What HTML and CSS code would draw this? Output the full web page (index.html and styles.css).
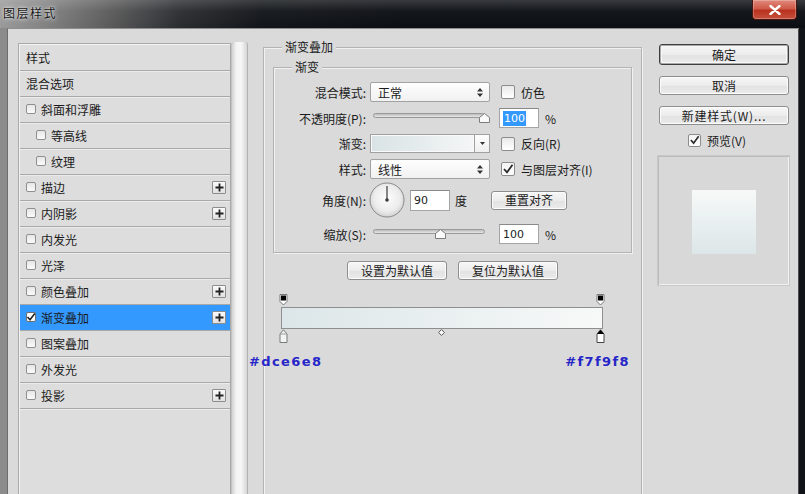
FILE: index.html
```html
<!DOCTYPE html>
<html>
<head>
<meta charset="utf-8">
<title>图层样式</title>
<link rel="stylesheet" href="styles.css">
</head>
<body>
<div class="window">
  <div class="titlebar">
    <span class="title">图层样式</span>
    <div class="close">
      <svg width="12" height="10" viewBox="0 0 12 10"><path d="M1.5 1 L10.5 9 M10.5 1 L1.5 9" stroke="#fff" stroke-width="2.4" stroke-linecap="round"/></svg>
    </div>
  </div>
  <div class="frame">
    <div class="client">
      <div class="leftcol">
        <div class="list">
          <div class="row">样式</div>
          <div class="row">混合选项</div>
          <div class="row"><span class="cb"></span>斜面和浮雕</div>
          <div class="row indent"><span class="cb"></span>等高线</div>
          <div class="row indent"><span class="cb"></span>纹理</div>
          <div class="row"><span class="cb"></span>描边<span class="plus"><svg width="9" height="9" viewBox="0 0 9 9"><path d="M4.5 0.5 V8.5 M0.5 4.5 H8.5" stroke="#222" stroke-width="1.8"/></svg></span></div>
          <div class="row"><span class="cb"></span>内阴影<span class="plus"><svg width="9" height="9" viewBox="0 0 9 9"><path d="M4.5 0.5 V8.5 M0.5 4.5 H8.5" stroke="#222" stroke-width="1.8"/></svg></span></div>
          <div class="row"><span class="cb"></span>内发光</div>
          <div class="row"><span class="cb"></span>光泽</div>
          <div class="row"><span class="cb"></span>颜色叠加<span class="plus"><svg width="9" height="9" viewBox="0 0 9 9"><path d="M4.5 0.5 V8.5 M0.5 4.5 H8.5" stroke="#222" stroke-width="1.8"/></svg></span></div>
          <div class="row active"><span class="cb checked"><svg width="10" height="10" viewBox="0 0 10 10"><path d="M1.5 5 L4 7.8 L8.8 1.5" stroke="#222" stroke-width="1.6" fill="none"/></svg></span>渐变叠加<span class="plus"><svg width="9" height="9" viewBox="0 0 9 9"><path d="M4.5 0.5 V8.5 M0.5 4.5 H8.5" stroke="#222" stroke-width="1.8"/></svg></span></div>
          <div class="row"><span class="cb"></span>图案叠加</div>
          <div class="row"><span class="cb"></span>外发光</div>
          <div class="row"><span class="cb"></span>投影<span class="plus"><svg width="9" height="9" viewBox="0 0 9 9"><path d="M4.5 0.5 V8.5 M0.5 4.5 H8.5" stroke="#222" stroke-width="1.8"/></svg></span></div>
        </div>
        <div class="scroll"></div>
      </div>

      <fieldset class="group outer">
        <legend>渐变叠加</legend>
        <fieldset class="group inner">
          <legend>渐变</legend>
          <div class="irow r1">
            <span class="lab">混合模式:</span>
            <div class="select"><span>正常</span>
              <svg class="updown" width="6" height="9" viewBox="0 0 6 9"><path d="M3 0 L6 3.5 H0 Z M3 9 L6 5.5 H0 Z" fill="#333"/></svg>
            </div>
            <span class="cbox"></span><span class="cbl">仿色</span>
          </div>
          <div class="irow r2">
            <span class="lab">不透明度(P):</span>
            <div class="slider">
              <div class="track"></div>
              <svg class="thumb" style="left:106px" width="11" height="10" viewBox="0 0 11 10"><path d="M0.5 9.5 V4.5 L5.5 0.5 L10.5 4.5 V9.5 Z" fill="#fafafa" stroke="#7d7d7d"/></svg>
            </div>
            <div class="num"><span class="sel">100</span></div>
            <span class="unit">%</span>
          </div>
          <div class="irow r3">
            <span class="lab">渐变:</span>
            <div class="swatch">
              <div class="g"></div>
              <div class="arr"><svg width="5" height="3" viewBox="0 0 5 3"><path d="M0 0 H5 L2.5 3 Z" fill="#333"/></svg></div>
            </div>
            <span class="cbox"></span><span class="cbl">反向(R)</span>
          </div>
          <div class="irow r4">
            <span class="lab">样式:</span>
            <div class="select"><span>线性</span>
              <svg class="updown" width="6" height="9" viewBox="0 0 6 9"><path d="M3 0 L6 3.5 H0 Z M3 9 L6 5.5 H0 Z" fill="#333"/></svg>
            </div>
            <span class="cbox checked"><svg width="12" height="12" viewBox="0 0 12 12"><path d="M2 6 L5 9.4 L10.5 1.8" stroke="#2a2a2a" stroke-width="1.8" fill="none"/></svg></span><span class="cbl">与图层对齐(I)</span>
          </div>
          <div class="irow r5">
            <span class="lab">角度(N):</span>
            <svg class="dial" width="36" height="36" viewBox="0 0 36 36">
              <defs>
                <radialGradient id="dg" cx="50%" cy="45%" r="55%">
                  <stop offset="0" stop-color="#fdfdfd"/>
                  <stop offset="0.7" stop-color="#ececec"/>
                  <stop offset="1" stop-color="#d2d2d2"/>
                </radialGradient>
              </defs>
              <circle cx="18" cy="18" r="17" fill="url(#dg)" stroke="#8a8a8a"/>
              <line x1="18" y1="18" x2="18" y2="4" stroke="#3a3a3a" stroke-width="1.2"/>
              <circle cx="18" cy="18" r="1.8" fill="#3a3a3a"/>
            </svg>
            <div class="num n90">90</div>
            <span class="unit">度</span>
            <div class="btn reset">重置对齐</div>
          </div>
          <div class="irow r6">
            <span class="lab">缩放(S):</span>
            <div class="slider">
              <div class="track"></div>
              <svg class="thumb" style="left:62px" width="11" height="10" viewBox="0 0 11 10"><path d="M0.5 9.5 V4.5 L5.5 0.5 L10.5 4.5 V9.5 Z" fill="#fafafa" stroke="#7d7d7d"/></svg>
            </div>
            <div class="num">100</div>
            <span class="unit">%</span>
          </div>
        </fieldset>

        <div class="btnrow">
          <div class="btn wide">设置为默认值</div>
          <div class="btn wide">复位为默认值</div>
        </div>

        <div class="gedit">
          <div class="stops top">
            <svg class="stop" style="left:-2px" width="9" height="12" viewBox="0 0 9 12"><path d="M1 0.5 H8 V7.5 L4.5 11 L1 7.5 Z" fill="#fff" stroke="#777"/><rect x="2" y="1.5" width="5" height="5" fill="#000"/></svg>
            <svg class="stop" style="left:315px" width="9" height="12" viewBox="0 0 9 12"><path d="M1 0.5 H8 V7.5 L4.5 11 L1 7.5 Z" fill="#fff" stroke="#777"/><rect x="2" y="1.5" width="5" height="5" fill="#000"/></svg>
          </div>
          <div class="gbar"></div>
          <div class="stops bottom">
            <svg class="stop" style="left:-2px" width="9" height="14" viewBox="0 0 9 14"><path d="M1 13.5 V5 L4.5 0.8 L8 5 V13.5 Z" fill="#f2f4f4" stroke="#7a7a7a"/><path d="M1 5 H8" stroke="#9a9a9a"/></svg>
            <svg class="diamond" width="7" height="7" viewBox="0 0 7 7"><path d="M3.5 0.6 L6.4 3.5 L3.5 6.4 L0.6 3.5 Z" fill="#fff" stroke="#555"/></svg>
            <svg class="stop" style="left:315px" width="9" height="14" viewBox="0 0 9 14"><path d="M1 13.5 V5 L4.5 0.8 L8 5 V13.5 Z" fill="#fff" stroke="#444"/><path d="M1 5 L4.5 0.8 L8 5 Z" fill="#000"/></svg>
          </div>
          <div class="hexrow">
            <span class="hex">#dce6e8</span>
            <span class="hex">#f7f9f8</span>
          </div>
        </div>
      </fieldset>

      <div class="rightcol">
        <div class="btn ok">确定</div>
        <div class="btn side">取消</div>
        <div class="btn side newstyle">新建样式(W)...</div>
        <div class="preview-row">
          <span class="cbox small checked"><svg width="12" height="12" viewBox="0 0 12 12"><path d="M2 6 L5 9.4 L10.5 1.8" stroke="#2a2a2a" stroke-width="1.8" fill="none"/></svg></span>
          <span class="cbl">预览(V)</span>
        </div>
        <div class="preview">
          <div class="psq"></div>
        </div>
      </div>
    </div>
  </div>
</div>
</body>
</html>
```

FILE: styles.css
```css
* { box-sizing: border-box; }
html, body { margin: 0; padding: 0; }
body {
  width: 805px;
  height: 494px;
  overflow: hidden;
  background: #0c0f14;
  font-family: "Noto Sans CJK SC", "Noto Sans", sans-serif;
  font-size: 12px;
  color: #1b1b1b;
}
.window {
  width: 805px;
  height: 494px;
  display: flex;
  flex-direction: column;
}

/* title bar */
.titlebar {
  height: 28px;
  flex: none;
  display: flex;
  align-items: flex-start;
  background:
    linear-gradient(to bottom, rgba(255,255,255,0.18) 0, rgba(255,255,255,0.04) 40%, rgba(0,0,0,0) 100%),
    linear-gradient(to right, #9a9a9a 0, #858585 40px, #5a5a5a 110px, #2a2c30 180px, #121519 260px, #0b0e13 400px, #0b0e13 100%);
}
.title {
  margin: 5px 0 0 3px;
  font-size: 12px;
  line-height: 16px;
  letter-spacing: 1.5px;
  color: #161616;
  text-shadow: 0 0 5px rgba(255,255,255,0.9), 0 0 2px rgba(255,255,255,0.7);
}
.close {
  margin-left: auto;
  margin-right: 8px;
  width: 45px;
  height: 20px;
  border: 1px solid #4a140f;
  border-top: none;
  border-radius: 0 0 4px 4px;
  background: linear-gradient(to bottom, #e0897c 0, #cf5a49 45%, #b8321f 55%, #c5503c 100%);
  box-shadow: inset 0 0 0 1px rgba(255,255,255,0.25);
  display: flex;
  align-items: center;
  justify-content: center;
}

/* frame + client */
.frame {
  flex: 1;
  min-height: 0;
  display: flex;
  border-left: 7px solid #8b8b8b;
  border-right: 6px solid #101318;
}
.client {
  flex: 1;
  display: flex;
  align-items: flex-start;
  background: #dadada;
  border-left: 1px solid #6c6c6c;
  border-top: 1px solid #8e8e8e;
  box-shadow: inset -1px 0 0 #4d4d4d;
  overflow: hidden;
}

/* left list */
.leftcol {
  flex: none;
  display: flex;
  margin: 14px 0 0 10px;
  height: 470px;
}
.list {
  width: 213px;
  height: 100%;
  border: 1px solid #a9a9a9;
  background: #dddddd;
  padding: 1px 0 0 1px;
  box-shadow: inset 1px 1px 0 #f3f3f3;
}
.row {
  height: 26px;
  display: flex;
  align-items: center;
  padding-left: 6px;
  padding-bottom: 1px;
  border-bottom: 1px solid #a8a8a8;
  box-shadow: 0 1px 0 #ececec;
  position: relative;
}
.row.indent { padding-left: 16px; }
.row.active { background: #3399ff; box-shadow: none; }
.cb {
  width: 10px;
  height: 10px;
  flex: none;
  margin-right: 5px;
  border: 1px solid #8f8f8f;
  border-radius: 2px;
  background: linear-gradient(#e6e6e6, #fbfbfb);
  display: flex;
  align-items: center;
  justify-content: center;
}
.cb.checked { background: #fff; border-color: #6f6f6f; }
.cb svg { flex: none; }
.plus {
  margin-left: auto;
  margin-right: 4px;
  width: 14px;
  height: 13px;
  border: 1px solid #8d8d8d;
  border-radius: 1px;
  background: linear-gradient(#fbfbfb, #e0e0e0);
  display: flex;
  align-items: center;
  justify-content: center;
}
.scroll {
  width: 17px;
  height: 100%;
  margin-top: -1px;
  border-left: 1px solid #c2c2c2;
  border-right: 1px solid #b2b2b2;
  border-radius: 3px 3px 0 0;
  background: linear-gradient(to right, #d3d3d3 0, #f4f4f4 30%, #f7f7f7 60%, #d6d6d6 100%);
}

/* group boxes */
fieldset.group {
  margin: 0;
  padding: 0;
  min-width: 0;
  border: 1px solid #b3b3b3;
  box-shadow: inset 1px 1px 0 #f1f1f1, 1px 1px 0 #f1f1f1;
}
fieldset.group > legend {
  padding: 0 3px;
  margin-left: 18px;
  line-height: 14px;
  font-size: 12px;
  background: #dadada;
}
.outer {
  flex: none;
  width: 379px;
  height: 480px;
  margin: 11px 0 0 15px !important;
}
.inner {
  margin: 6px 9px 0 9px !important;
  padding: 0 0 8px 0 !important;
}

.irow {
  display: flex;
  align-items: center;
  height: 20px;
}
.r1 { margin-top: 8px; }
.r2 { margin-top: 6px; }
.r3 { margin-top: 6px; height: 19px; }
.r4 { margin-top: 6px; }
.r5 { margin-top: 3px; height: 36px; }
.r6 { margin-top: 6px; }

.lab {
  width: 92px;
  flex: none;
  text-align: right;
  margin-right: 4px;
  white-space: nowrap;
}
.select {
  width: 120px;
  height: 20px;
  flex: none;
  display: flex;
  align-items: center;
  justify-content: space-between;
  padding: 0 6px 0 7px;
  border: 1px solid #a2a2a2;
  border-radius: 2px;
  background: linear-gradient(#fefefe, #f1f1f1);
}
.cbox {
  width: 14px;
  height: 14px;
  flex: none;
  margin-left: 11px;
  border: 1px solid #8c8c8c;
  border-radius: 2px;
  background: linear-gradient(#e9e9e9, #ffffff);
  display: flex;
  align-items: center;
  justify-content: center;
}
.cbox.checked { background: linear-gradient(#f4f4f4, #ffffff); }
.cbl { margin-left: 6px; white-space: nowrap; }

.slider {
  width: 112px;
  height: 20px;
  flex: none;
  margin-left: 3px;
  position: relative;
}
.track {
  margin-top: 5px;
  height: 5px;
  border: 1px solid #9a9a9a;
  border-radius: 3px;
  background: linear-gradient(#bdbdbd, #e6e6e6);
}
.thumb { position: absolute; top: 5px; }

.num {
  width: 40px;
  height: 20px;
  flex: none;
  margin-left: 14px;
  display: flex;
  align-items: center;
  padding-left: 3px;
  border: 1px solid #a5a5a5;
  border-top-color: #8a8a8a;
  background: #fff;
  font-family: "DejaVu Sans", sans-serif;
  font-size: 11px;
  color: #222;
}
.sel {
  background: #3399ff;
  color: #fff;
  padding: 1px 1px;
  line-height: 13px;
}
.num.n90 { margin-left: 5px; height: 21px; }
.unit { margin-left: 6px; }
.r5 .unit { margin-left: 5px; }

.swatch {
  width: 120px;
  height: 19px;
  flex: none;
  display: flex;
  border: 1px solid #a0a0a0;
  background: #fff;
}
.swatch .g {
  flex: 1;
  border: 1px solid #fafafa;
  background: linear-gradient(to right, #d9e3e5, #f4f6f6);
}
.swatch .arr {
  width: 15px;
  border-left: 1px solid #a0a0a0;
  background: linear-gradient(#fdfdfd, #efefef);
  display: flex;
  align-items: center;
  justify-content: center;
}
.dial { flex: none; margin-left: -1px; }

.btn {
  height: 19px;
  flex: none;
  display: flex;
  align-items: center;
  justify-content: center;
  border: 1px solid #8e8e8e;
  border-radius: 3px;
  background: linear-gradient(#f7f7f7 0, #ececec 50%, #e2e2e2 51%, #ebebeb 100%);
  box-shadow: inset 0 0 0 1px #fcfcfc;
  white-space: nowrap;
  line-height: 1;
}
.reset { width: 76px; margin-left: 24px; height: 19px; }

.btnrow {
  display: flex;
  justify-content: center;
  gap: 11px;
  margin-top: 8px;
}
.btn.wide { width: 100px; }

/* gradient editor */
.gedit {
  margin: 14px 0 0 17px;
  width: 322px;
}
.stops { position: relative; }
.stops.top { height: 13px; }
.stops.bottom { height: 14px; }
.stop { position: absolute; top: 0; }
.diamond { position: absolute; left: 157px; top: 0; }
.gbar {
  height: 22px;
  border: 1px solid #8f8f8f;
  background: linear-gradient(to right, #dce6e8, #f7f9f8);
}
.hexrow {
  display: flex;
  justify-content: space-between;
  margin: 11px -27px 0 -32px;
  position: relative;
}
.hex {
  font-family: "DejaVu Sans", sans-serif;
  font-weight: bold;
  font-size: 13px;
  line-height: 16px;
  letter-spacing: 1.4px;
  color: #2626c8;
}

/* right column */
.rightcol {
  flex: none;
  width: 130px;
  margin: 15px 0 0 17px;
  display: flex;
  flex-direction: column;
}
.btn.ok {
  height: 21px;
  border: 1px solid #3f3f3f;
  box-shadow: inset 0 0 0 1px #a9a9a9, inset 0 0 0 2px #f8f8f8;
}
.btn.side { margin-top: 11px; }
.btn.newstyle { margin-top: 11px; letter-spacing: 0.8px; }
.preview-row {
  margin-top: 8px;
  height: 14px;
  display: flex;
  align-items: center;
  padding-left: 29px;
}
.cbox.small { margin-left: 0; width: 13px; height: 13px; }
.preview-row .cbl { margin-left: 6px; }
.preview {
  margin: 8px -1px 0 -2px;
  height: 131px;
  border: 1px solid #c8c8c8;
  box-shadow: inset 1px 1px 0 #bcbcbc, inset -1px -1px 0 #f2f2f2;
  background: #d8d8d8;
  display: flex;
  justify-content: center;
  padding-top: 34px;
}
.psq {
  width: 64px;
  height: 64px;
  background: linear-gradient(to bottom, #f7f9f8, #dce6e8);
}
```
